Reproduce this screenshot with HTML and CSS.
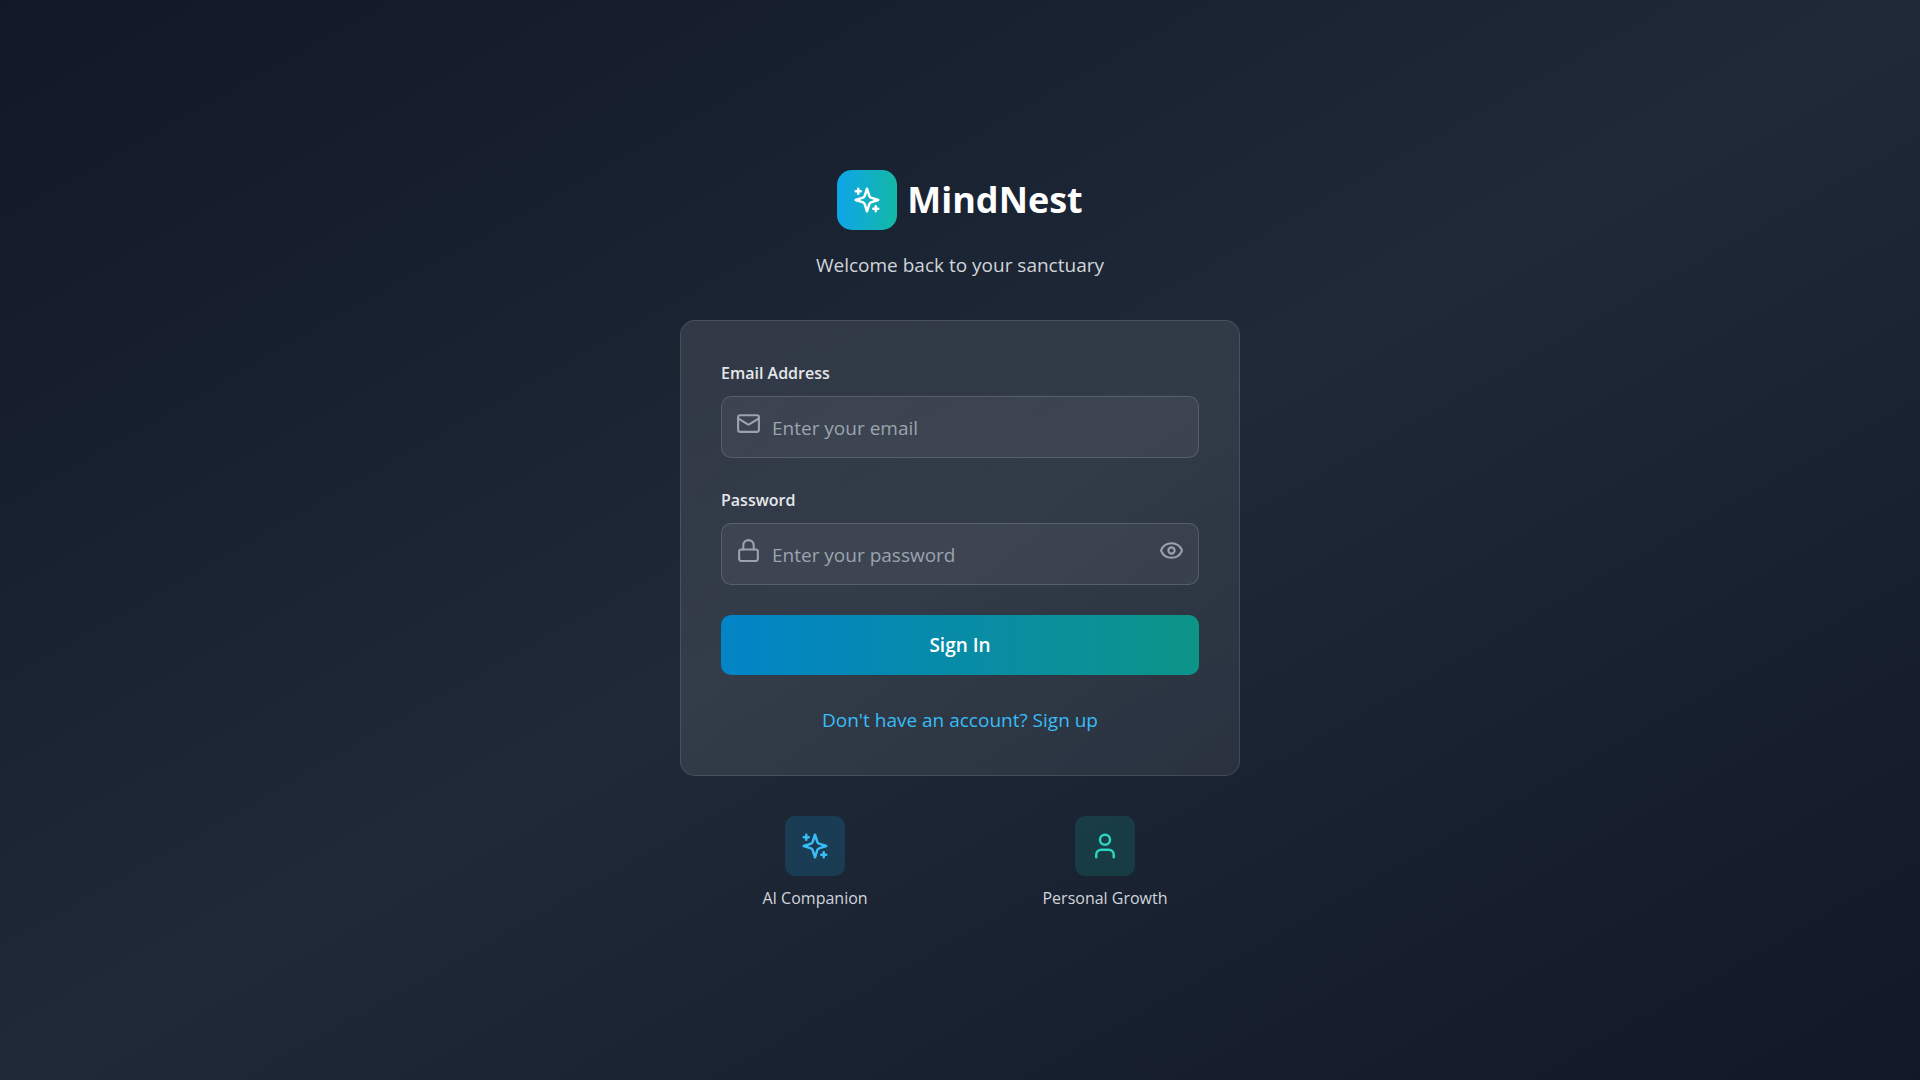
FILE: index.html
```
<!DOCTYPE html>
<html lang="en">

<head>
  <meta charset="UTF-8">
  <meta name="viewport" content="width=device-width, initial-scale=1.0">
  <title>MindNest - Sign In</title>
  <link rel="stylesheet" href="styles.css">
</head>

<body>
  <main class="login">
    <header class="login-header">
      <div class="brand">
        <div class="brand-logo">
          <svg class="icon icon-lg" viewBox="0 0 24 24" aria-hidden="true">
            <path d="m12 3-1.912 5.813a2 2 0 0 1-1.275 1.275L3 12l5.813 1.912a2 2 0 0 1 1.275 1.275L12 21l1.912-5.813a2 2 0 0 1 1.275-1.275L21 12l-5.813-1.912a2 2 0 0 1-1.275-1.275L12 3Z"/>
            <path d="M5 3v4M3 5h4M19 17v4M17 19h4"/>
          </svg>
        </div>
        <h1 class="brand-name">MindNest</h1>
      </div>
      <p class="tagline">Welcome back to your sanctuary</p>
    </header>

    <section class="card">
      <form class="login-form">
        <div class="field">
          <label class="field-label" for="email">Email Address</label>
          <div class="field-box">
            <svg class="icon" viewBox="0 0 24 24" aria-hidden="true">
              <rect x="2" y="4" width="20" height="16" rx="2"/>
              <path d="m22 7-8.97 5.7a1.94 1.94 0 0 1-2.06 0L2 7"/>
            </svg>
            <input class="field-input" type="email" id="email" placeholder="Enter your email">
          </div>
        </div>

        <div class="field">
          <label class="field-label" for="password">Password</label>
          <div class="field-box">
            <svg class="icon" viewBox="0 0 24 24" aria-hidden="true">
              <rect x="3" y="11" width="18" height="11" rx="2"/>
              <path d="M7 11V7a5 5 0 0 1 10 0v4"/>
            </svg>
            <input class="field-input" type="password" id="password" placeholder="Enter your password">
            <button class="toggle" type="button" id="toggle" aria-label="Show password">
              <svg class="icon" viewBox="0 0 24 24" aria-hidden="true">
                <path d="M2.062 12.348a1 1 0 0 1 0-.696 10.75 10.75 0 0 1 19.876 0 1 1 0 0 1 0 .696 10.75 10.75 0 0 1-19.876 0"/>
                <circle cx="12" cy="12" r="3"/>
              </svg>
            </button>
          </div>
        </div>

        <button class="submit" type="submit">Sign In</button>
      </form>
      <p class="signup"><a class="signup-link" href="#signup">Don't have an account? Sign up</a></p>
    </section>

    <section class="features">
      <div class="feature">
        <div class="feature-icon feature-sky">
          <svg class="icon icon-lg" viewBox="0 0 24 24" aria-hidden="true">
            <path d="m12 3-1.912 5.813a2 2 0 0 1-1.275 1.275L3 12l5.813 1.912a2 2 0 0 1 1.275 1.275L12 21l1.912-5.813a2 2 0 0 1 1.275-1.275L21 12l-5.813-1.912a2 2 0 0 1-1.275-1.275L12 3Z"/>
            <path d="M5 3v4M3 5h4M19 17v4M17 19h4"/>
          </svg>
        </div>
        <p class="feature-name">AI Companion</p>
      </div>
      <div class="feature">
        <div class="feature-icon feature-teal">
          <svg class="icon icon-lg" viewBox="0 0 24 24" aria-hidden="true">
            <path d="M19 21v-2a4 4 0 0 0-4-4H9a4 4 0 0 0-4 4v2"/>
            <circle cx="12" cy="7" r="4"/>
          </svg>
        </div>
        <p class="feature-name">Personal Growth</p>
      </div>
    </section>
  </main>

  <script>
    const passwordInput = document.getElementById('password');
    const toggleButton = document.getElementById('toggle');

    toggleButton.addEventListener('click', () => {
      passwordInput.type = passwordInput.type === 'password' ? 'text' : 'password';
    });
  </script>
</body>

</html>
```
FILE: styles.css
```
* {
  box-sizing: border-box;
  margin: 0;
  padding: 0;
}

body {
  min-height: 100vh;
  display: flex;
  align-items: center;
  justify-content: center;
  padding: 20px;
  background: linear-gradient(to bottom right, #111827, #1f2937, #111827);
  color: #d1d5db;
  font-family: "Segoe UI", "Open Sans", "Noto Sans", sans-serif;
  font-size: 19px;
  line-height: 30px;
}

button,
input {
  font: inherit;
}

.icon {
  display: block;
  flex: none;
  width: 25px;
  height: 25px;
  fill: none;
  stroke: currentColor;
  stroke-width: 2;
  stroke-linecap: round;
  stroke-linejoin: round;
}

.icon-lg {
  width: 30px;
  height: 30px;
}

.login {
  width: 100%;
  max-width: 560px;
}

.login-header {
  margin-bottom: 40px;
  text-align: center;
}

.brand {
  display: flex;
  align-items: center;
  justify-content: center;
  gap: 10px;
  margin-bottom: 20px;
}

.brand-logo {
  display: flex;
  align-items: center;
  justify-content: center;
  width: 60px;
  height: 60px;
  border-radius: 15px;
  background: linear-gradient(to right, #0ea5e9, #14b8a6);
  color: #fff;
}

.brand-name {
  color: #fff;
  font-size: 36px;
  font-weight: 700;
  line-height: 45px;
}

.card {
  padding: 40px;
  border: 1px solid rgba(255, 255, 255, 0.12);
  border-radius: 15px;
  background: linear-gradient(135deg, rgba(255, 255, 255, 0.1), rgba(255, 255, 255, 0.07)) border-box;
}

.login-form {
  display: flex;
  flex-direction: column;
  gap: 30px;
}

.field-label {
  display: block;
  margin-bottom: 10px;
  color: #e5e7eb;
  font-size: 16px;
  font-weight: 600;
  line-height: 25px;
}

.field-box {
  display: flex;
  gap: 10px;
  padding: 15px;
  border-radius: 10px;
  background: rgba(255, 255, 255, 0.05);
  box-shadow: inset 0 0 0 1px rgba(255, 255, 255, 0.15);
  color: #9ca3af;
}

.field-box:focus-within {
  box-shadow: inset 0 0 0 1px #0ea5e9;
}

.field-input {
  flex: 1;
  min-width: 0;
  height: 32px;
  padding: 2px 1px 0;
  border: none;
  outline: none;
  background: none;
  color: #fff;
}

.field-input::placeholder {
  color: #9ca3af;
}

.toggle {
  height: 25px;
  border: none;
  background: none;
  color: inherit;
  cursor: pointer;
}

.submit {
  padding: 15px;
  border: none;
  border-radius: 10px;
  background: linear-gradient(to right, #0284c7, #0d9488);
  color: #fff;
  font-size: 19px;
  font-weight: 600;
  cursor: pointer;
}

.signup {
  margin-top: 30px;
  text-align: center;
}

.signup-link {
  color: #38bdf8;
  text-decoration: none;
}

.features {
  display: grid;
  grid-template-columns: 1fr 1fr;
  gap: 20px;
  margin-top: 40px;
}

.feature {
  display: flex;
  flex-direction: column;
  align-items: center;
  gap: 10px;
}

.feature-icon {
  display: flex;
  align-items: center;
  justify-content: center;
  width: 60px;
  height: 60px;
  border-radius: 10px;
}

.feature-sky {
  background: rgba(14, 165, 233, 0.18);
  color: #38bdf8;
}

.feature-teal {
  background: rgba(20, 184, 166, 0.17);
  color: #2dd4bf;
}

.feature-name {
  font-size: 16px;
  line-height: 25px;
}
```
